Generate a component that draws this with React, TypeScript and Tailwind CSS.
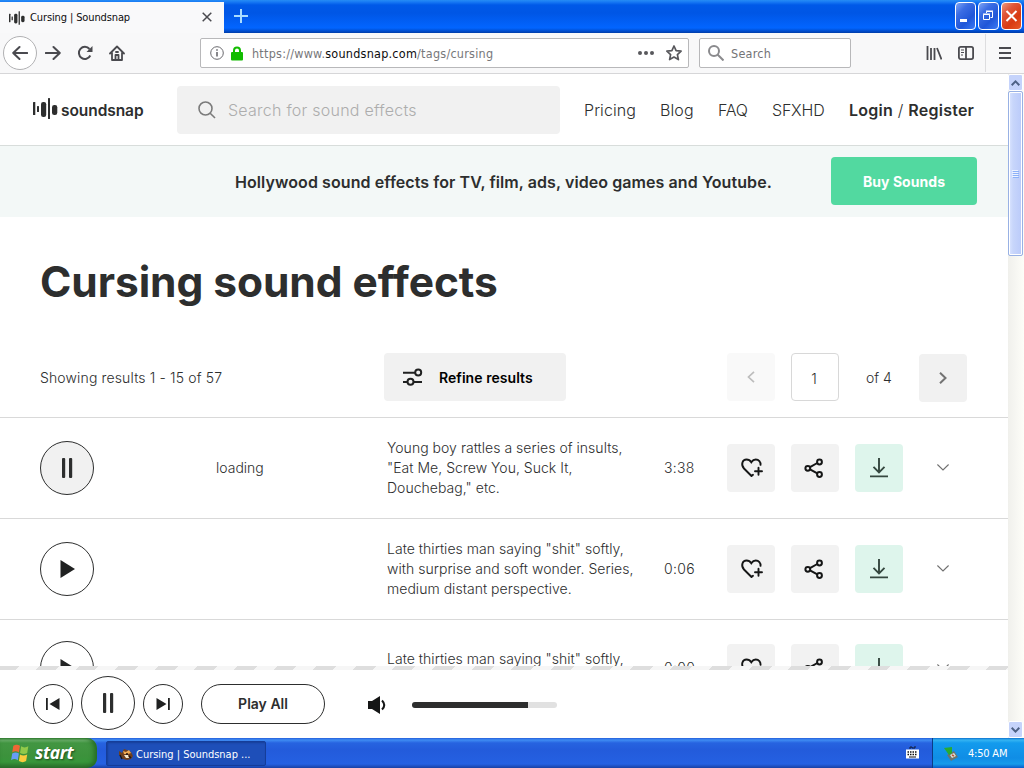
import React from "react";

const ui = "font-['DejaVu_Sans_Condensed','DejaVu_Sans',sans-serif] [font-stretch:condensed]";

function Bars({ className }: { className: string }) {
  return (
    <svg viewBox="0 0 25 21" className={className} fill="#2d2e2e">
      <rect x="0" y="4" width="2.3" height="13" rx="0.5" />
      <rect x="4" y="8" width="2" height="6" rx="0.5" />
      <rect x="8" y="4" width="5.2" height="15" rx="2.2" />
      <rect x="15" y="0" width="2" height="21" rx="0.5" />
      <rect x="19" y="7" width="5.3" height="10" rx="2.3" />
    </svg>
  );
}

function TitleBar() {
  const btn = "flex h-7 w-[21px] items-center justify-center rounded-[4px] border border-white";
  return (
    <div className="flex h-[33px] w-full bg-[linear-gradient(180deg,#268cf5_0,#1779f4_2px,#0059e8_5px,#0056e5_13px,#0262fa_25px,#0265ff_28px,#0044bc_32px,#003da7_33px)]">
      <div className="mt-0.5 flex h-[31px] w-[224px] items-center bg-[#f9f9fa] pl-[9px]">
        <Bars className="h-[14px] w-4" />
        <span className={`${ui} ml-[5px] mt-px w-[178px] whitespace-nowrap text-[11px] tracking-[-0.12px] text-[#0c0c0d]`}>Cursing | Soundsnap</span>
        <svg viewBox="0 0 10 10" className="-ml-[6px] -mt-px size-[10px]" stroke="#4a4a4f" strokeWidth="1.5"><path d="M.7.7l8.6 8.6M9.3.7L.7 9.3" /></svg>
      </div>
      <svg viewBox="0 0 14 14" className="ml-[10px] mt-[9px] size-[14px]" stroke="#a9dcff" strokeWidth="2"><path d="M7 0v14M0 7h14" /></svg>
      <div className="ml-auto mr-[2px] mt-[2px] flex gap-[2px]">
        <div className={`${btn} bg-[linear-gradient(135deg,#7fa5f5_0%,#3b6de4_30%,#2056d8_65%,#3b7af5_100%)]`}>
          <svg viewBox="0 0 19 26" className="h-[26px] w-[19px]"><path d="M4 16h7v3H4z" fill="#fff" /></svg>
        </div>
        <div className={`${btn} bg-[linear-gradient(135deg,#7fa5f5_0%,#3b6de4_30%,#2056d8_65%,#3b7af5_100%)]`}>
          <svg viewBox="0 0 19 26" className="h-[26px] w-[19px]" fill="none" stroke="#fff"><path d="M7.5 10V8.500h6v6h-2M7 8h7" /><path d="M4.500 11.500h6v5h-6zM4 11h7" /></svg>
        </div>
        <div className={`${btn} bg-[linear-gradient(135deg,#f09a80_0%,#e0573a_30%,#d83a12_65%,#e85a28_100%)]`}>
          <svg viewBox="0 0 19 26" className="h-[26px] w-[19px]" stroke="#fff" strokeWidth="2"><path d="M4.500 8l10 10M14.500 8l-10 10" /></svg>
        </div>
      </div>
    </div>
  );
}

function Toolbar() {
  return (
    <div className="flex h-[41px] w-full items-center border-b border-[#d6d6d8] bg-[#f8f8f9] pl-[3px] text-[#4a4a4f]">
      <div className="flex size-[34px] shrink-0 items-center justify-center rounded-full border border-[#b1b1b3] bg-white">
        <svg viewBox="0 0 16 16" className="size-4" fill="none" stroke="currentColor" strokeWidth="2" strokeLinecap="round" strokeLinejoin="round"><path d="M15.200 8H1.200M7.500 2L1.200 8l6.300 6" /></svg>
      </div>
      <svg viewBox="0 0 16 16" className="ml-2 size-4 shrink-0" fill="none" stroke="currentColor" strokeWidth="2" strokeLinecap="round" strokeLinejoin="round"><path d="M.8 8h14M8.500 2l6.300 6-6.300 6" /></svg>
      <svg viewBox="0 0 16 16" className="ml-4 size-4 shrink-0" fill="none" stroke="currentColor" strokeWidth="2"><path d="M13.300 10.500A6 6 0 1 1 12.500 4" /><path d="M15.500 1v6H9.500z" fill="currentColor" stroke="none" /></svg>
      <svg viewBox="0 0 16 16" className="ml-4 size-4 shrink-0" fill="none" stroke="currentColor" strokeWidth="1.800" strokeLinejoin="round" strokeLinecap="round"><path d="M1 8.500L8 1.500l7 7M3 8v7h10V8" /><path d="M6.500 14v-4h3v4" /><path d="M7 7h2" /></svg>
      <div className="ml-[75px] flex h-[30px] w-[489px] shrink-0 items-center rounded-[2px] border border-[#b8b8ba] bg-white pl-[9px]">
        <svg viewBox="0 0 14 14" className="size-[14px]" fill="none" stroke="#6a6a6e"><circle cx="7" cy="7" r="6.300" /><path d="M7 6v4.500M7 3.200v1.500" strokeWidth="1.600" /></svg>
        <svg viewBox="0 0 12 15" className="ml-[7px] h-[15px] w-3"><path d="M3 7V4.500a3 3 0 0 1 6 0V7" fill="none" stroke="#12bc00" strokeWidth="2" /><rect y="6" width="12" height="8.500" rx="1" fill="#12bc00" /></svg>
        <span className={`${ui} ml-[9px] mt-[3px] w-[386px] whitespace-nowrap text-[12.500px] tracking-[0.24px] text-[#77777a]`}>https://www.<span className="text-[#0c0c0d]">soundsnap.com</span>/tags/cursing</span>
        <svg viewBox="0 0 16 4" className="h-1 w-4" fill="#58585c"><circle cx="2" cy="2" r="2" /><circle cx="8" cy="2" r="2" /><circle cx="14" cy="2" r="2" /></svg>
        <svg viewBox="0 0 16 16" className="ml-3 size-4" fill="none" stroke="#58585c" strokeWidth="1.700" strokeLinejoin="round"><path d="M8 1l2.100 4.600 5 .6-3.700 3.400 1 5L8 12.100l-4.400 2.500 1-5L.9 6.200l5-.6z" /></svg>
      </div>
      <div className="ml-[10px] flex h-[30px] w-[152px] shrink-0 items-center rounded-[2px] border border-[#b8b8ba] bg-white pl-2">
        <svg viewBox="0 0 16 16" className="size-4" fill="none" stroke="#8a8a8d" strokeWidth="2"><circle cx="6" cy="6" r="5" /><path d="M9.500 9.500l6 6" /></svg>
        <span className={`${ui} ml-[7px] mt-[3px] text-[12.500px] tracking-[0.25px] text-[#737376]`}>Search</span>
      </div>
      <svg viewBox="0 0 16 14" className="ml-[75px] h-[14px] w-4 shrink-0" fill="none" stroke="currentColor" strokeWidth="1.800"><path d="M1.500 0v14M5 2v12M8.500 2v12M11 2l4.500 11.500" /></svg>
      <svg viewBox="0 0 16 14" className="ml-4 h-[14px] w-4 shrink-0" fill="none" stroke="currentColor" strokeWidth="1.800"><rect x=".9" y=".9" width="14.200" height="12.200" rx="1.800" /><path d="M8 1v12" /><path d="M3 4h3M3 6.500h3M3 9h2" strokeWidth="1" /></svg>
      <div className="ml-[11px] h-[38px] w-px bg-[#dddddf]" />
      <svg viewBox="0 0 12 12" className="ml-[13px] h-3 w-3 shrink-0" stroke="currentColor" strokeWidth="1.900"><path d="M0 1h12M0 6h12M0 11h12" /></svg>
    </div>
  );
}

function Header() {
  return (
    <div className="flex h-[72px] shrink-0 items-center border-b border-[#d8dddb] pl-8 text-[16px] font-light">
      <Bars className="-mt-0.5 ml-px h-[21px] w-[25px]" />
      <span className="ml-[3px] mt-0.5 w-[83px] whitespace-nowrap text-[15.500px] font-semibold tracking-[-0.07px]">soundsnap</span>
      <div className="ml-[33px] flex h-12 w-[383px] items-center rounded bg-[#f1f1f1] pl-[21px]">
        <svg viewBox="0 0 18 18" className="size-[18px]" fill="none" stroke="#7b7b7b" strokeWidth="1.600"><circle cx="7.500" cy="7.500" r="6.500" /><path d="M12.200 12.200L17 17" /></svg>
        <span className="ml-3 whitespace-nowrap tracking-[0.25px] text-[#adadad]">Search for sound effects</span>
      </div>
      <span className="ml-6 w-[76px] tracking-[0.08px]">Pricing</span>
      <span className="w-[58px] tracking-[0.1px]">Blog</span>
      <span className="w-[54px] tracking-[-0.2px]">FAQ</span>
      <span className="w-[77px] tracking-[-0.2px]">SFXHD</span>
      <span className="whitespace-nowrap tracking-[0.24px]"><b className="font-semibold">Login</b> / <b className="font-semibold">Register</b></span>
    </div>
  );
}

function PlayIcon({ paused }: { paused: boolean }) {
  return (
    <div className={`flex size-[54px] shrink-0 items-center justify-center rounded-full border border-[#2d2e2e] ${paused ? "bg-white" : "bg-[#f1f1f1]"}`}>
      {paused ? (
        <svg viewBox="0 0 16 18" className="h-[18px] w-4" fill="#202121"><path d="M1.500 0l14.500 9L1.500 18z" /></svg>
      ) : (
        <svg viewBox="0 0 12 20" className="h-5 w-3" fill="#2d2e2e"><rect x="1" width="3.200" height="20" rx="1" /><rect x="8" width="3.200" height="20" rx="1" /></svg>
      )}
    </div>
  );
}

function Row({ lines, time, loading, className }: { lines: string[]; time: string; loading?: boolean; className: string }) {
  const box = "flex size-12 shrink-0 items-center justify-center rounded";
  return (
    <div className={`flex shrink-0 items-center border-b border-[#d9d9d9] pl-10 ${className}`}>
      <PlayIcon paused={!loading} />
      <div className="-mt-0.5 ml-[122px] w-[171px] text-[14px]">{loading ? "loading" : ""}</div>
      <div className="min-h-[38px] w-[277px] whitespace-nowrap text-[14px] leading-5 tracking-[0.03px]">
        {lines.map((l) => <div key={l}>{l}</div>)}
      </div>
      <div className="-mt-px w-[63px] text-[14px] tracking-[0.3px]">{time}</div>
      <div className={`${box} bg-[#f2f2f2]`}>
        <svg viewBox="0 0 24 20" className="ml-0.5 h-5 w-6" fill="none" stroke="#151616" strokeWidth="1.900" strokeLinecap="round"><path d="M11.500 18L4 10.500C.5 6.500 2.500 1.500 6.500 1.500c2.200 0 3.700 1 4.800 2.800C12.500 2.500 14 1.500 15.800 1.500c3 0 5 2.300 4.700 5.300M11.500 18l1.500-1.200" /><path d="M18.500 9.800v7M15 13.300h7" /></svg>
      </div>
      <div className={`${box} ml-4 bg-[#f2f2f2]`}>
        <svg viewBox="0 0 20 20" className="-ml-0.5 size-5" fill="none" stroke="#151616" strokeWidth="2"><circle cx="3.800" cy="10.300" r="2.400" /><circle cx="15.500" cy="4" r="2.400" /><circle cx="15.500" cy="16.500" r="2.400" /><path d="M6 9.200L13.300 5M6 11.400l7.300 4" /></svg>
      </div>
      <div className={`${box} ml-4 bg-[#def5ec]`}>
        <svg viewBox="0 0 20 20" className="size-5" fill="none" stroke="#35473f" strokeWidth="1.900"><path d="M10 0v14M4.500 8.800l5.500 5.500 5.500-5.500M1 18.400h18" /></svg>
      </div>
      <svg viewBox="0 0 12 7" className="-mt-[2px] ml-[34px] h-[7px] w-3" fill="none" stroke="#707070" strokeWidth="1.100"><path d="M.4.5L6 6 11.600.5" /></svg>
    </div>
  );
}

function Content() {
  return (
    <div className="flex h-[592px] w-full flex-col overflow-hidden">
      <Header />
      <div className="flex h-[71px] shrink-0 items-center bg-[#f3f8f7] pl-[235px]">
        <span className="w-[596px] whitespace-nowrap text-[16px] font-semibold tracking-[0.08px]">Hollywood sound effects for TV, film, ads, video games and Youtube.</span>
        <div className="-mt-px flex h-12 w-[146px] items-center justify-center rounded bg-[#52d9a0] pt-px text-[14px] font-bold tracking-[0.05px] text-white">Buy Sounds</div>
      </div>
      <h1 className="mt-[33px] h-[64px] shrink-0 whitespace-nowrap pl-10 text-[42.500px] font-bold leading-[64px] tracking-[-0.08px]">Cursing sound effects</h1>
      <div className="mt-[39px] flex h-[65px] shrink-0 items-start border-b border-[#d9d9d9] pl-10 text-[14px] font-light">
        <div className="w-[344px] leading-[50px] tracking-[0.14px]">Showing results 1 - 15 of 57</div>
        <div className="flex h-12 w-[182px] items-center rounded bg-[#f1f1f1] pl-[19px] font-semibold text-black">
          <svg viewBox="0 0 20 18" className="h-[18px] w-5" fill="none" stroke="#202121" strokeWidth="2"><path d="M0 4.800h12M0 14h4.500M10.500 14H19" /><circle cx="15.200" cy="4.500" r="3" /><circle cx="7.500" cy="13.700" r="3" /></svg>
          <span className="ml-4 whitespace-nowrap pt-px tracking-[0.05px]">Refine results</span>
        </div>
        <div className="ml-[161px] flex h-12 w-12 items-center justify-center rounded bg-[#f9f9f9]"><svg viewBox="0 0 8 12" className="h-3 w-2" fill="none" stroke="#bdbdbd" strokeWidth="1.700"><path d="M7 .8L1.500 6 7 11.200" /></svg></div>
        <div className="ml-4 flex h-12 w-12 items-center justify-center rounded border border-[#d8d8d8] pr-0.5 pt-0.5">1</div>
        <div className="ml-[27px] w-[53px] whitespace-nowrap leading-[50px]">of 4</div>
        <div className="mt-px flex h-12 w-12 items-center justify-center rounded bg-[#f1f1f1]"><svg viewBox="0 0 8 12" className="-mt-px h-3 w-2" fill="none" stroke="#737373" strokeWidth="2"><path d="M1 .8L6.500 6 1 11.200" /></svg></div>
      </div>
      <div className="flex flex-col font-light text-[#2d2e2e]">
        <Row className="h-[101px]" loading time="3:38" lines={["Young boy rattles a series of insults,", "\"Eat Me, Screw You, Suck It,", "Douchebag,\" etc."]} />
        <Row className="h-[101px]" time="0:06" lines={["Late thirties man saying \"shit\" softly,", "with surprise and soft wonder. Series,", "medium distant perspective."]} />
        <Row className="h-[97px]" time="0:00" lines={["Late thirties man saying \"shit\" softly,"]} />
      </div>
    </div>
  );
}

function Player() {
  const small = "flex size-10 items-center justify-center rounded-full border border-[#2d2e2e]";
  return (
    <div className="flex h-[72px] w-full flex-col bg-white">
      <div className="h-1 shrink-0 bg-[repeating-linear-gradient(135deg,#dedede_0,#dedede_14px,#f6f6f6_14px,#f6f6f6_28px)]" />
      <div className="flex h-[68px] items-center pl-[33px]">
        <div className={small}><svg viewBox="0 0 14 12" className="-ml-px h-3 w-[14px]" fill="#202121"><path d="M0 0h1.800v12H0zM13.500 0v12L3.500 6z" /></svg></div>
        <div className="-mt-0.5 ml-2 flex size-[54px] items-center justify-center rounded-full border border-[#2d2e2e]"><svg viewBox="0 0 12 20" className="h-5 w-3" fill="#2d2e2e"><rect x="1" width="3.200" height="20" rx="1" /><rect x="8" width="3.200" height="20" rx="1" /></svg></div>
        <div className={`${small} ml-2`}><svg viewBox="0 0 14 12" className="h-3 w-[14px]" fill="#202121"><path d="M12 0h1.800v12H12zM.5 0v12L10.500 6z" /></svg></div>
        <div className="ml-[18px] flex h-10 w-[124px] items-center justify-center rounded-full border border-[#2d2e2e] pb-px text-[14px] font-semibold">Play All</div>
        <svg viewBox="0 0 19 18" className="ml-[43px] mt-0.5 h-[18px] w-[19px]" fill="#151616"><path d="M0 5h4l8-5v18l-8-5H0z" /><path d="M14 4.500q4.500 4.500 0 9" fill="none" stroke="#151616" strokeWidth="2" /></svg>
        <div className="ml-[25px] mt-[2px] flex h-[6px] w-[145px] overflow-hidden rounded-[3px] bg-[#e1e1e1]"><div className="w-[116px] bg-[#2d2e2e]" /></div>
      </div>
    </div>
  );
}

function Scrollbar() {
  const btn = "flex h-[17px] w-[15px] shrink-0 items-center justify-center rounded-[2px] border border-white bg-[#c5d3fb]";
  return (
    <div className="flex h-[664px] w-4 flex-col items-start bg-[linear-gradient(90deg,#f0f0ec,#fdfdf8)]">
      <div className={btn}><svg viewBox="0 0 9 6" className="h-[6px] w-[9px]" fill="none" stroke="#4d6185" strokeWidth="2"><path d="M.7 5.200l3.800-3.800 3.800 3.800" /></svg></div>
      <div className="flex h-[165px] w-[15px] shrink-0 items-center justify-center rounded-[2px] border border-[#98b1e4] bg-[linear-gradient(90deg,#dbe5ff_0,#c8d6fb_30%,#bacafa_100%)] shadow-[inset_0_0_0_1px_white]">
        <svg viewBox="0 0 7 8" className="h-2 w-[7px]" stroke="#edf2ff"><path d="M0 .5h6M0 2.500h6M0 4.500h6M0 6.500h6" /><path d="M1 1.500h6M1 3.500h6M1 5.500h6M1 7.500h6" stroke="#8cb0f8" /></svg>
      </div>
      <div className={`${btn} mt-auto`}><svg viewBox="0 0 9 6" className="h-[6px] w-[9px]" fill="none" stroke="#4d6185" strokeWidth="2"><path d="M.7.8l3.800 3.800L8.300.8" /></svg></div>
    </div>
  );
}

function Taskbar() {
  return (
    <div className="flex h-[30px] w-full bg-[linear-gradient(180deg,#245edb_0,#3f8cf3_2px,#2663e0_5px,#235bdb_12px,#2561e2_26px,#1941a5_30px)]">
      <div className="flex h-[30px] w-[97px] items-center rounded-r-[10px] bg-[linear-gradient(180deg,#388838_0,#71b571_2px,#429642_5px,#3c923c_18px,#37963a_24px,#2c6e2e_30px)] pl-[10px] shadow-[inset_-3px_0_5px_#246b24]">
        <svg viewBox="0 0 18 18" className="size-5">
          <path d="M3 2.500q3-2 6 0L8 8.500q-3-2-6 0z" fill="#ef6735" />
          <path d="M10 3q3 2 6.500 0l-1 6q-3 2-6.500 0z" fill="#91c94a" />
          <path d="M2 9.500q3-2 6 0L7 15.500q-3-2-6 0z" fill="#669df6" />
          <path d="M9 10.300q3 2 6.500 0l-1 6q-3 2-6.500 0z" fill="#f9cb3d" />
        </svg>
        <span className="ml-[5px] font-['Open_Sans','Noto_Sans',sans-serif] text-[17.500px] font-bold italic leading-none tracking-[-0.4px] text-white [text-shadow:1px_1px_2px_#1b4b1b]">start</span>
      </div>
      <div className="ml-[9px] mt-[3px] flex h-[25px] w-[160px] items-center rounded-[2px] border border-[#153d99] bg-[#1e4fb9] pl-[11px] shadow-[inset_1px_1px_2px_#173f98]">
        <svg viewBox="0 0 15 14" className="h-[14px] w-[15px]"><path d="M1 4l3 2 2-4 3 1 4 2 2 4-2 3-4 1-4-1-2-3-2-1z" fill="#70401e" /><path d="M5 4l3 1 3-2 2 3-3 1-4 0z" fill="#f0aa52" /><path d="M6 8l4 0 1 3-3 0z" fill="#f4e9d1" /><path d="M2 8l2 4M8 7h2M11 9l2 2" stroke="#1d1512" strokeWidth="1.500" /></svg>
        <span className={`${ui} ml-[3px] mt-[3px] whitespace-nowrap text-[11px] tracking-[-0.02px] text-white`}>Cursing | Soundsnap ...</span>
      </div>
      <svg viewBox="0 0 13 13" className="ml-auto mr-[13px] mt-[8px] h-[13px] w-[13px]"><path d="M4 3V1h2v1h3V0" fill="none" stroke="#111a35" /><rect y="3.500" width="13" height="9" fill="#fff" /><path d="M1.500 6h10M1.500 8.500h10" stroke="#111" strokeWidth="1.500" strokeDasharray="1.500 1" /><path d="M3 11h7" stroke="#111" /></svg>
      <div className="flex h-[30px] w-[92px] items-center border-l border-[#0b3c86] bg-[linear-gradient(180deg,#0c70cd_0,#35b4f2_2px,#139bed_5px,#0f8de6_20px,#159bea_26px,#095bc9_30px)] pl-[11px]">
        <svg viewBox="0 0 14 15" className="h-[15px] w-[14px]"><path d="M3 9l7-4 4 6-7 4z" fill="#6c756e" /><path d="M6 9l4-2 2 3-4 2z" fill="#dce3d5" /><path d="M0 2l8-1v6L5 9z" fill="#28ab31" /><path d="M8 9l2 1" stroke="#c45333" strokeWidth="1.500" /></svg>
        <span className={`${ui} ml-[10px] mt-0.5 whitespace-nowrap text-[11px] tracking-[-0.2px] text-white`}>4:50 AM</span>
      </div>
    </div>
  );
}

export default function App() {
  return (
    <div className="flex h-[768px] w-[1024px] flex-col overflow-hidden bg-white">
      <TitleBar />
      <Toolbar />
      <div className="flex h-[664px]">
        <div className="flex h-[664px] w-[1008px] flex-col bg-white font-['Inter',sans-serif] text-[#2d2e2e]">
          <Content />
          <Player />
        </div>
        <Scrollbar />
      </div>
      <Taskbar />
    </div>
  );
}
